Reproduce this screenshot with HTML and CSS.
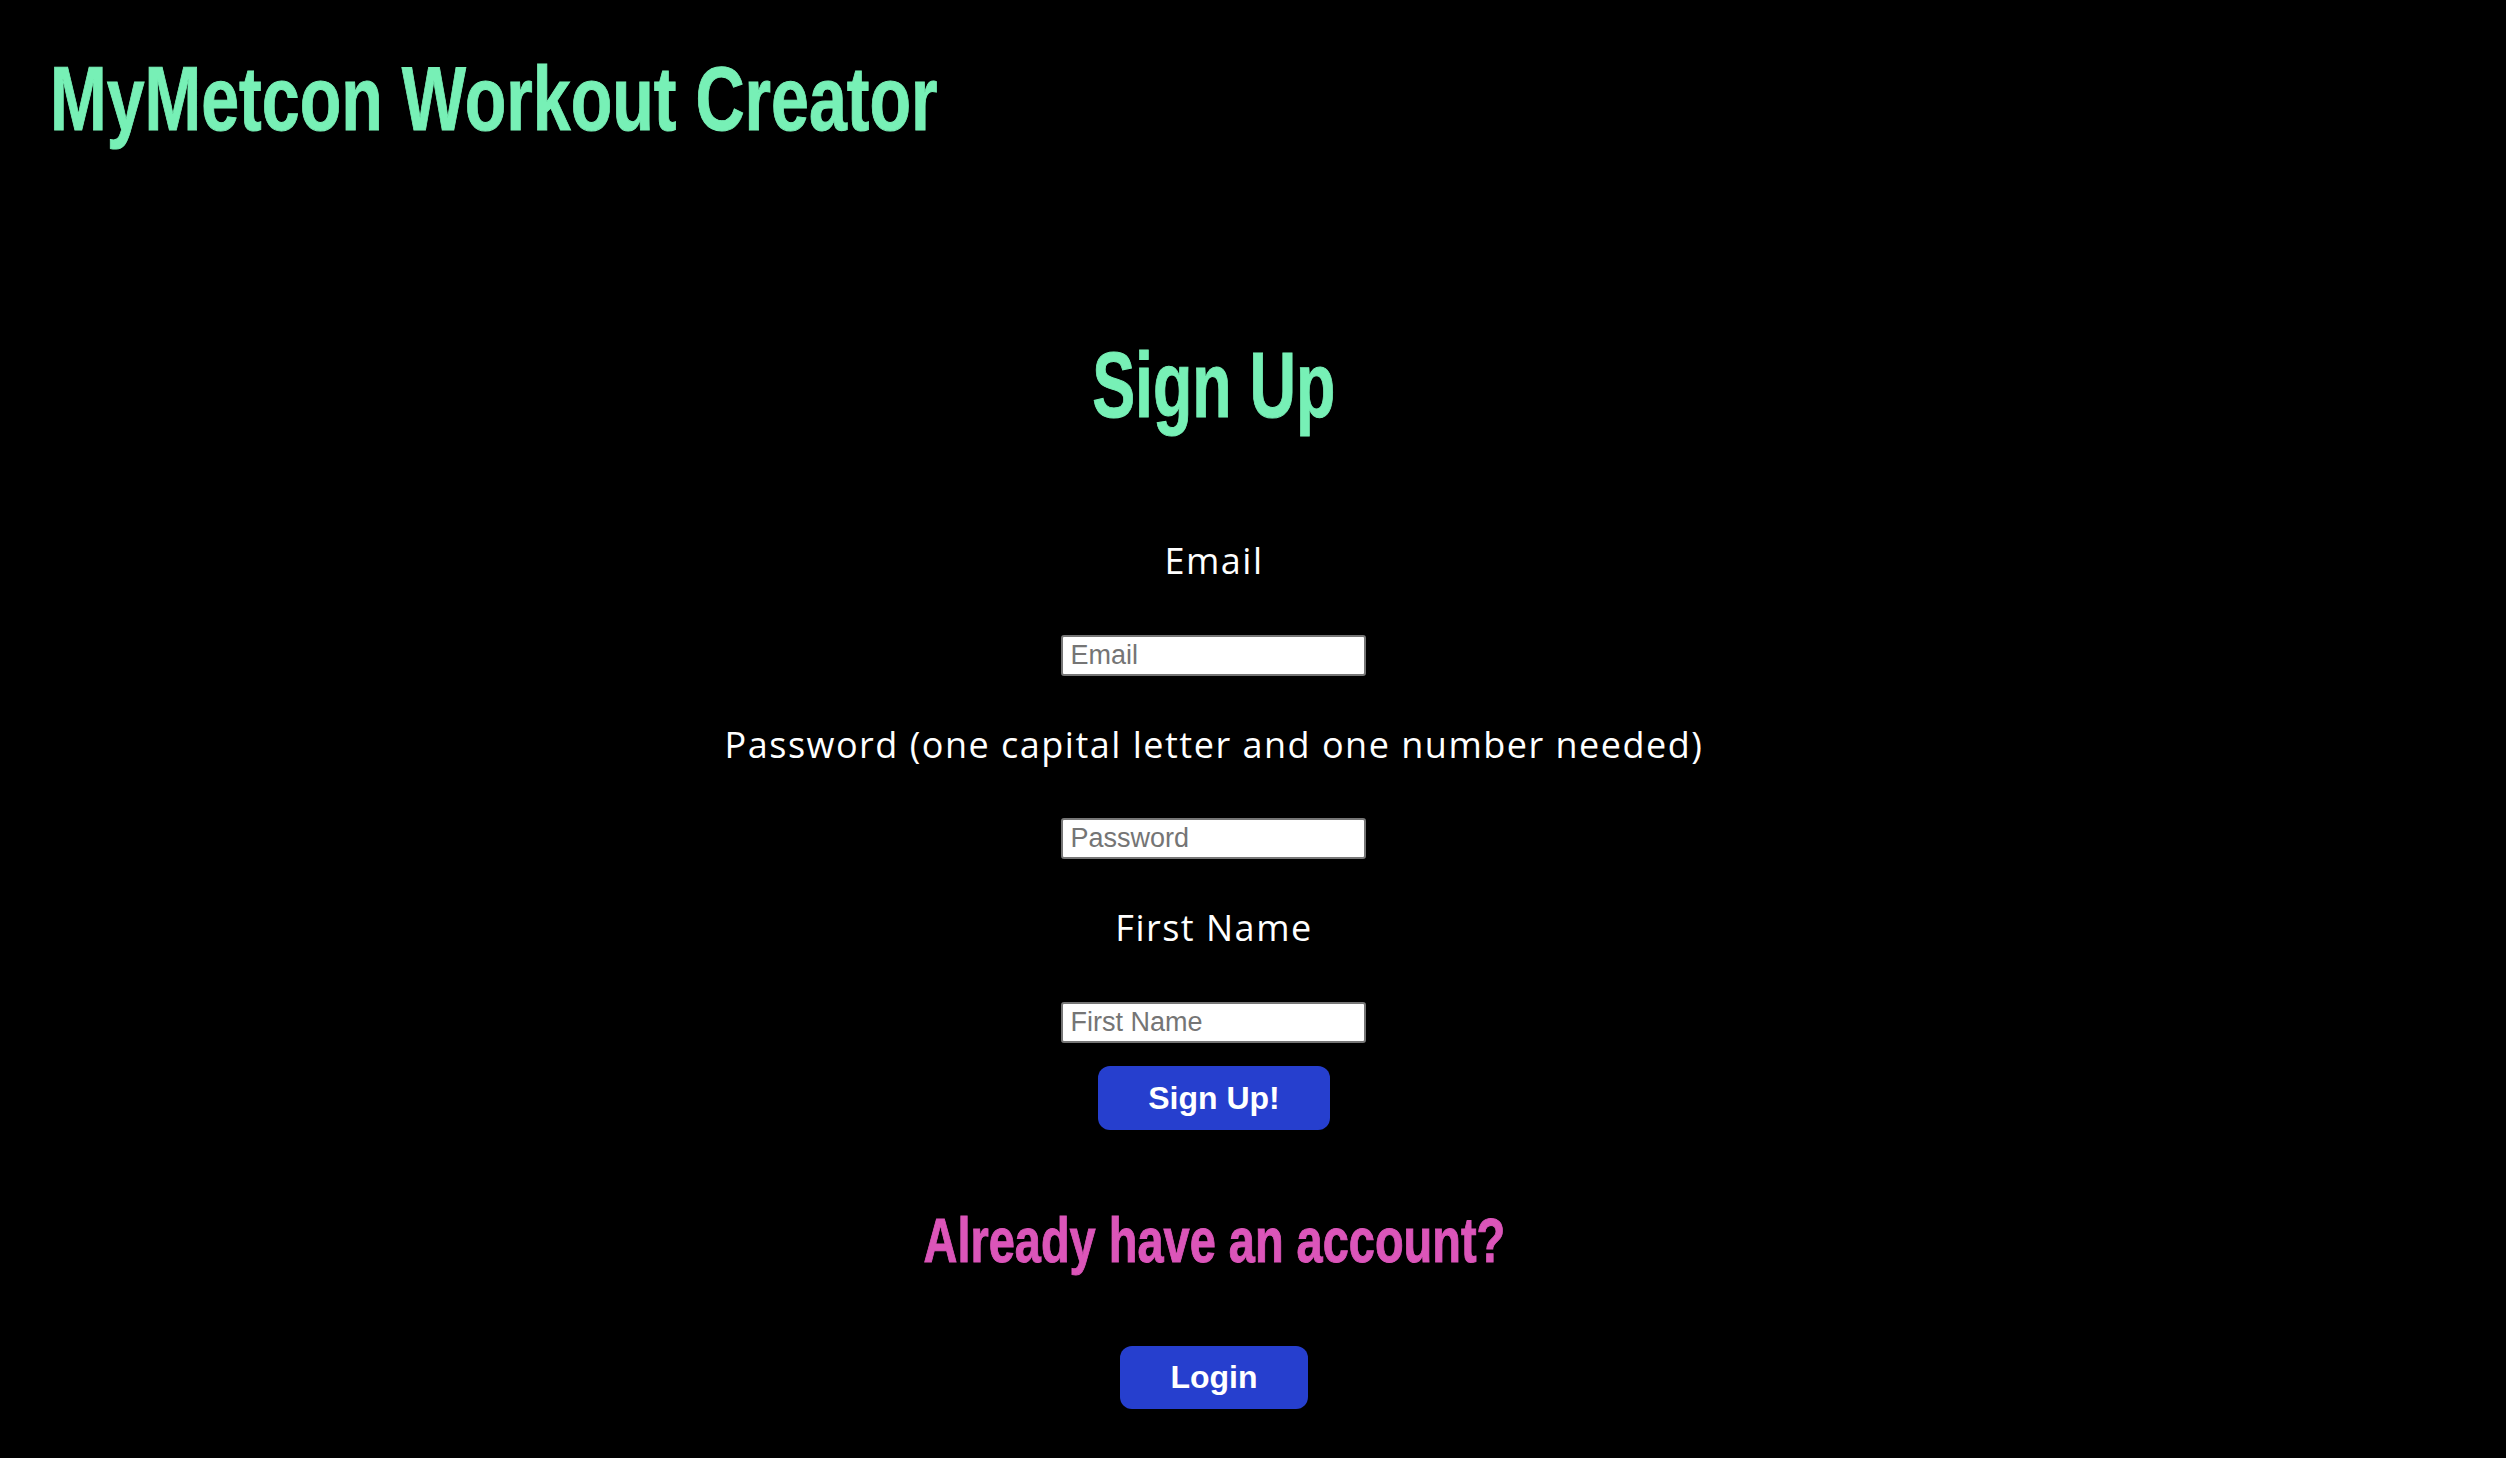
FILE: index.html
```html
<!DOCTYPE html>
<html lang="en">
<head>
<meta charset="utf-8">
<title>MyMetcon Workout Creator</title>
<link rel="stylesheet" href="styles.css">
</head>
<body>
<header class="site-header">
  <h1 class="site-title">MyMetcon Workout Creator</h1>
</header>
<main class="signup">
  <h2 class="signup-heading">Sign Up</h2>
  <form class="signup-form">
    <label class="field-label" for="email">Email</label>
    <input class="field-input" id="email" type="email" placeholder="Email">
    <label class="field-label" for="password">Password (one capital letter and one number needed)</label>
    <input class="field-input" id="password" type="password" placeholder="Password">
    <label class="field-label" for="first">First Name</label>
    <input class="field-input" id="first" type="text" placeholder="First Name">
    <button class="btn btn-signup" type="button">Sign Up!</button>
  </form>
  <h2 class="account-heading">Already have an account?</h2>
  <button class="btn btn-login" type="button">Login</button>
</main>
</body>
</html>
```

FILE: styles.css
```css
html, body {
  margin: 0;
  padding: 0;
  background: #000;
}

body {
  min-height: 1458px;
  font-family: "Liberation Sans", Arial, sans-serif;
}

.site-header {
  padding-left: 50px;
  padding-top: 53px;
}

.site-title {
  margin: 0;
  display: inline-block;
  font-family: "Liberation Sans", Arial, sans-serif;
  font-weight: 700;
  font-size: 91px;
  line-height: 1;
  color: #77f0b6;
  white-space: nowrap;
  -webkit-text-stroke: 1px #77f0b6;
  transform: scaleX(0.748);
  transform-origin: left center;
}

.signup {
  display: flex;
  flex-direction: column;
  align-items: center;
  padding-right: 78px;
  padding-top: 195px;
}

.signup-heading {
  margin: 0;
  font-family: "Liberation Sans", Arial, sans-serif;
  font-weight: 700;
  font-size: 92px;
  line-height: 1;
  color: #77f0b6;
  white-space: nowrap;
  -webkit-text-stroke: 1px #77f0b6;
  transform: scaleX(0.70);
}

.signup-form {
  display: flex;
  flex-direction: column;
  align-items: center;
  margin-top: 112px;
}

.field-label {
  display: block;
  font-family: "Open Sans", sans-serif;
  font-weight: 400;
  font-size: 36px;
  line-height: 1;
  letter-spacing: 1.5px;
  color: #fff;
  text-align: center;
  white-space: nowrap;
}

.field-label + .field-input {
  margin-top: 55.5px;
}

.field-input + .field-label {
  margin-top: 51px;
}

.field-input {
  box-sizing: border-box;
  width: 305px;
  height: 41px;
  padding: 0 7px;
  border: 2px solid #767676;
  border-radius: 3px;
  background: #fff;
  font-family: "Liberation Sans", Arial, sans-serif;
  font-size: 27px;
  color: #000;
}

.field-input::placeholder {
  color: #757575;
}

.btn {
  box-sizing: border-box;
  height: 64px;
  padding: 0 50px;
  border: none;
  border-radius: 12px;
  background: #263fce;
  color: #fff;
  font-family: "Liberation Sans", Arial, sans-serif;
  font-weight: 700;
  font-size: 32px;
  line-height: 1;
}

.btn-signup {
  margin-top: 23px;
}

.account-heading {
  margin: 79px 0 0;
  font-family: "Liberation Sans", Arial, sans-serif;
  font-weight: 700;
  font-size: 63px;
  line-height: 1;
  color: #db55b9;
  white-space: nowrap;
  -webkit-text-stroke: 1px #db55b9;
  transform: scaleX(0.745);
}

.btn-login {
  margin-top: 74px;
  height: 63px;
}
```
